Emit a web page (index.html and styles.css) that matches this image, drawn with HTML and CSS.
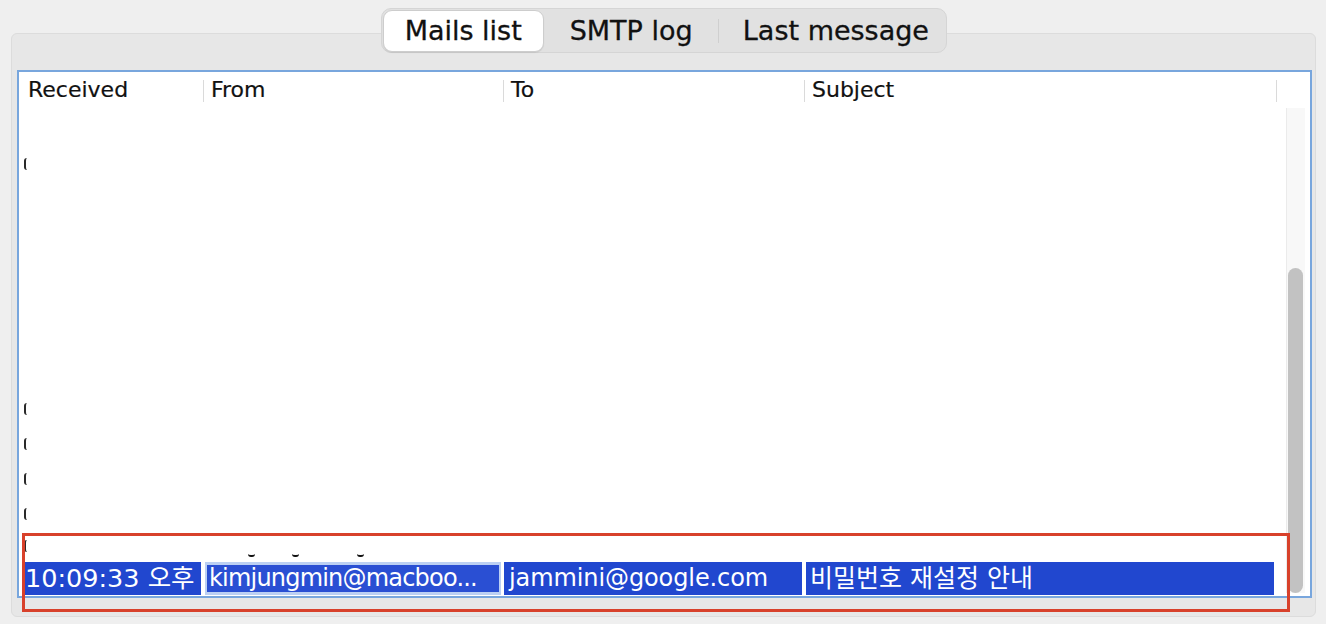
FILE: index.html
```html
<!DOCTYPE html>
<html lang="ko">
<head>
<meta charset="utf-8">
<title>Mails list</title>
<link rel="stylesheet" href="styles.css">
</head>
<body>
<div class="app">
  <div class="tabs">
    <div class="tab tab-active">Mails list</div>
    <div class="tab tab-smtp">SMTP log</div>
    <div class="tab-sep"></div>
    <div class="tab tab-last">Last message</div>
  </div>
  <div class="panel">
    <div class="table">
      <div class="thead">
        <div class="th">Received</div>
        <div class="th sep">From</div>
        <div class="th sep">To</div>
        <div class="th sep">Subject</div>
        <div class="th sep"></div>
      </div>
      <div class="tbody">
        <div class="row"><span class="clip"></span></div>
        <div class="row"></div>
        <div class="row"></div>
        <div class="row"></div>
        <div class="row"></div>
        <div class="row"></div>
        <div class="row"></div>
        <div class="row"><span class="clip"></span></div>
        <div class="row"><span class="clip"></span></div>
        <div class="row"><span class="clip"></span></div>
        <div class="row"><span class="clip"></span></div>
        <div class="row row-last"><span class="clip"></span><span class="frag"></span><span class="frag f2"></span><span class="frag f3"></span></div>
      </div>
      <div class="selrow">
        <div class="cell c1">10:09:33 오후</div>
        <div class="cell c2"><span class="focus">kimjungmin@macboo...</span></div>
        <div class="cell c3">jammini@google.com</div>
        <div class="cell c4">비밀번호 재설정 안내</div>
      </div>
      <div class="scrollbar"><div class="thumb"></div></div>
    </div>
  </div>
</div>
<div class="annot"></div>
</body>
</html>
```
FILE: styles.css
```css
html, body {
  margin: 0;
  padding: 0;
}
body {
  width: 1326px;
  height: 624px;
  overflow: hidden;
  background: #efefef;
  font-family: "DejaVu Sans", "Noto Sans CJK KR", sans-serif;
  color: #141414;
  position: relative;
}
.app {
  display: flex;
  flex-direction: column;
  padding: 8px 10px 0 11px;
}
.tabs {
  align-self: center;
  position: relative;
  z-index: 1;
  display: flex;
  align-items: center;
  box-sizing: border-box;
  height: 45px;
  width: 566px;
  padding: 0 1px;
  background: #e1e1e1;
  border: 1px solid #d5d5d5;
  border-radius: 10px;
  font-size: 27px;
}
.tab {
  display: flex;
  align-items: center;
  justify-content: center;
  height: 42px;
  box-sizing: border-box;
  color: #111111;
  white-space: nowrap;
  -webkit-text-stroke: 0.3px #111111;
}
.tab-active {
  width: 162px;
  background: #ffffff;
  border: 1px solid #cdcdcd;
  border-radius: 9px;
  box-shadow: 0 1px 1px rgba(0,0,0,0.08);
}
.tab-smtp {
  width: 175px;
}
.tab-sep {
  width: 1px;
  height: 24px;
  background: #cfcfcf;
}
.tab-last {
  width: 226px;
  padding-left: 8px;
}
.panel {
  margin-top: -20px;
  height: 584px;
  box-sizing: border-box;
  background: #e7e7e7;
  border: 1px solid #dcdcdc;
  border-radius: 6px;
  padding: 36px 3px 18px 5px;
}
.table {
  position: relative;
  height: 528px;
  box-sizing: border-box;
  border: 2px solid #78a6dd;
  background: #ffffff;
  display: flex;
  flex-direction: column;
}
.thead {
  display: grid;
  grid-template-columns: 184px 300px 301px 472px 1fr;
  height: 36px;
  flex: none;
}
.th {
  font-size: 22px;
  line-height: 36px;
  padding-left: 9px;
  white-space: nowrap;
  color: #111111;
  -webkit-text-stroke: 0.2px #111111;
}
.th.sep {
  padding-left: 8px;
  background: linear-gradient(#dadada, #dadada) no-repeat 0 8px / 1px 22px;
}
.tbody {
  flex: 1;
  overflow: hidden;
  padding-top: 38px;
  box-sizing: border-box;
}
.row {
  height: 35px;
  display: flex;
  align-items: center;
  padding-left: 5px;
}
.clip {
  width: 3px;
  height: 12px;
  box-sizing: border-box;
  border-left: 2px solid #2a2a2a;
  border-radius: 3px 0 0 3px;
}
.row-last {
  align-items: flex-start;
  padding-top: 9px;
  box-sizing: border-box;
}
.frag {
  width: 7px;
  height: 3px;
  margin-top: 14px;
  margin-left: 221px;
  box-sizing: border-box;
  border-bottom: 2px solid #111;
  border-radius: 0 0 4px 4px;
}
.frag.f2 {
  margin-left: 37px;
}
.frag.f3 {
  margin-left: 58px;
}
.selrow {
  flex: none;
  display: grid;
  grid-template-columns: 184px 300px 301px 472px 1fr;
  height: 33px;
  margin-bottom: 1px;
  font-size: 24.5px;
  line-height: 33px;
  color: #ffffff;
}
.cell {
  background: #2147cf;
  white-space: nowrap;
  overflow: hidden;
  margin: 0 2px 0 0;
}
.c1 {
  margin-left: 3px;
  padding-left: 3px;
  font-size: 25.5px;
}
.c2 {
  margin-left: 2px;
  background: #bcd0f3;
  padding: 3px 2px;
  box-sizing: border-box;
  display: flex;
}
.focus {
  flex: 1;
  background: #2a4fd3;
  line-height: 27px;
  padding-left: 2px;
  font-size: 24px;
  letter-spacing: -0.8px;
  overflow: hidden;
}
.c3 {
  margin-left: 1px;
  padding-left: 5px;
  font-size: 24px;
  letter-spacing: -0.1px;
}
.c4 {
  margin-left: 2px;
  padding-left: 4px;
  font-size: 25px;
}
.scrollbar {
  position: absolute;
  left: 1267px;
  top: 36px;
  bottom: 3px;
  width: 18px;
  background: #f8f8f8;
  border-left: 1px solid #ebebeb;
}
.thumb {
  position: absolute;
  left: 1px;
  top: 160px;
  bottom: 0;
  width: 15px;
  background: #c2c2c2;
  border-radius: 8px;
}
.annot {
  position: absolute;
  left: 22px;
  top: 533px;
  width: 1268px;
  height: 79px;
  box-sizing: border-box;
  border: 3px solid #d8412b;
}
```
